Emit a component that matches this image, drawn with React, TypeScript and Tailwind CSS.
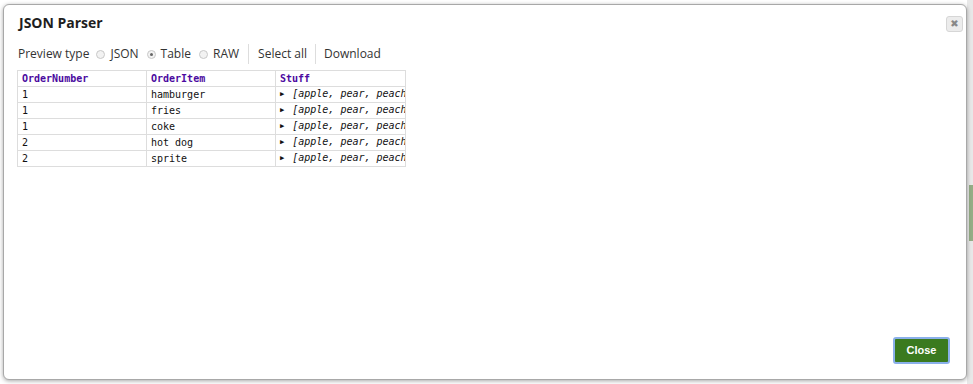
import React from "react";

const rows = [
  ["1", "hamburger"],
  ["1", "fries"],
  ["1", "coke"],
  ["2", "hot dog"],
  ["2", "sprite"],
];

function Radio({ checked }: { checked?: boolean }) {
  return (
    <span className="inline-flex w-[9px] h-[9px] rounded-full border border-[#c8c8c8] bg-[#f2f2f2] items-center justify-center mr-[5px]">
      {checked && <span className="w-[3px] h-[3px] rounded-full bg-[#666]" />}
    </span>
  );
}

export default function App() {
  return (
    <div className="relative w-[973px] h-[384px] bg-white overflow-hidden" style={{ fontFamily: '"Open Sans", sans-serif' }}>
      <div className="absolute right-0 top-0 w-[6px] h-full bg-[#e8e8e8]">
        <div className="absolute left-[2px] top-[185px] w-[4px] h-[56px] bg-[#95ad86]" />
      </div>
      <div className="absolute left-[3px] top-[4px] w-[964px] h-[376px] bg-white border border-[#a8a8a8] rounded-[6px] shadow-[0_1px_4px_rgba(0,0,0,0.35)] flex flex-col">
        <div className="flex items-start justify-between pl-[15px] pr-[3px] pt-[8px]">
          <div className="text-[14px] font-bold text-[#1e1e1e] leading-[20px]">JSON Parser</div>
          <div className="mt-[3px] w-[17px] h-[16px] rounded-[3px] border border-[#d6d6d6] bg-[#ececec] flex items-center justify-center text-[#888] text-[10px] font-bold leading-none" style={{ fontFamily: '"DejaVu Sans", sans-serif' }}>
            ✖
          </div>
        </div>
        <div className="flex items-center pl-[14px] mt-[12px] text-[12px] text-[#333] leading-[18px] h-[18px]">
          <span className="mr-[7px]">Preview type</span>
          <Radio />
          <span className="mr-[8px]">JSON</span>
          <Radio checked />
          <span className="mr-[8px]">Table</span>
          <Radio />
          <span>RAW</span>
          <span className="mx-[9px] w-px h-[20px] bg-[#ddd]" />
          <span>Select all</span>
          <span className="mx-[8px] w-px h-[20px] bg-[#ddd]" />
          <span>Download</span>
        </div>
        <div className="ml-[13px] mt-[7px] w-[388px]">
          <table className="border-collapse table-fixed w-[388px] text-[10px]" style={{ fontFamily: '"DejaVu Sans Mono", monospace' }}>
            <colgroup>
              <col className="w-[129px]" />
              <col className="w-[129px]" />
              <col className="w-[130px]" />
            </colgroup>
            <thead>
              <tr>
                <th className="h-[16px] p-0 leading-[14px] border border-[#ddd] text-left pl-[4px] font-bold text-[#4b0aa0]">OrderNumber</th>
                <th className="h-[16px] p-0 leading-[14px] border border-[#ddd] text-left pl-[4px] font-bold text-[#4b0aa0]">OrderItem</th>
                <th className="h-[16px] p-0 leading-[14px] border border-[#ddd] text-left pl-[4px] font-bold text-[#4b0aa0]">Stuff</th>
              </tr>
            </thead>
            <tbody>
              {rows.map((r, i) => (
                <tr key={i} className="text-[#111]">
                  <td className="h-[16px] p-0 leading-[14px] border border-[#ddd] pl-[4px] whitespace-nowrap overflow-hidden">{r[0]}</td>
                  <td className="h-[16px] p-0 leading-[14px] border border-[#ddd] pl-[4px] whitespace-nowrap overflow-hidden">{r[1]}</td>
                  <td className="h-[16px] p-0 leading-[14px] border border-[#ddd] pl-[4px] whitespace-nowrap overflow-hidden">
                    <span className="text-[7px] mr-[8px] relative top-[-1px]">▶</span>
                    <span className="italic">[apple, pear, peach]</span>
                  </td>
                </tr>
              ))}
            </tbody>
          </table>
        </div>
        <div className="flex-1" />
        <div className="flex justify-end pr-[16px] pb-[15px]">
          <button
            className="w-[57px] h-[27px] bg-[#3a7a1f] border-2 border-[#8ab0ea] rounded-[3px] text-white text-[11px] font-bold"
            style={{ fontFamily: '"Liberation Sans", Arial, sans-serif' }}
          >
            Close
          </button>
        </div>
      </div>
    </div>
  );
}
